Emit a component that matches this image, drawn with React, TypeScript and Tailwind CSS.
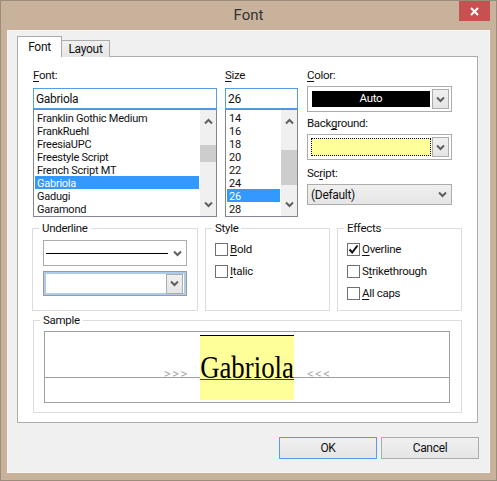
import type { ReactNode } from "react";

const fontNames = ["Franklin Gothic Medium", "FrankRuehl", "FreesiaUPC", "Freestyle Script", "French Script MT", "Gabriola", "Gadugi", "Garamond"];
const sizes = ["14", "16", "18", "20", "22", "24", "26", "28"];

const Chevron = ({ up = false }: { up?: boolean }) => (
  <svg width="9" height="7" viewBox="0 0 9 7" className={up ? "rotate-180" : ""}>
    <path d="M1 1.5 L4.5 5 L8 1.5" fill="none" stroke="#5f5f5f" strokeWidth="2" />
  </svg>
);

const Key = ({ children }: { children: ReactNode }) => <span className="underline underline-offset-2">{children}</span>;

const DropButton = () => (
  <div className="flex w-[17px] items-center justify-center self-stretch border border-[#acacac] bg-gradient-to-b from-[#f0f0f0] to-[#e5e5e5]">
    <Chevron />
  </div>
);

const ListBox = ({ items, selected, width, thumbTop, thumbHeight }: { items: string[]; selected: string; width: string; thumbTop: string; thumbHeight: string }) => (
  <div className={"flex h-[108px] overflow-hidden border border-[#828790] bg-white pl-px " + width}>
    <div className="min-w-0 flex-1 pt-px text-[11px] tracking-[-0.25px]">
      {items.map((item) => (
        <div key={item} className={"h-[13px] whitespace-nowrap pl-[2px] leading-[15px] " + (item === selected ? "bg-[#3399ff] text-white" : "")}>
          {item}
        </div>
      ))}
    </div>
    <div className="relative ml-px flex w-[16px] flex-col items-center justify-between bg-[#f0f0f0] py-[8px]">
      <Chevron up />
      <div className={"absolute inset-x-0 bg-[#cdcdcd] " + thumbTop + " " + thumbHeight} />
      <Chevron />
    </div>
  </div>
);

const CheckRow = ({ label, checked = false }: { label: ReactNode; checked?: boolean }) => (
  <div className="flex h-[13px] items-center gap-[2px]">
    <div className="flex h-[13px] w-[13px] items-center justify-center border border-[#707070] bg-white">
      {checked && (
        <svg width="11" height="11" viewBox="0 0 11 11">
          <path d="M1.5 5.5 L4.2 8.5 L9.5 1.5" fill="none" stroke="#111" strokeWidth="2" />
        </svg>
      )}
    </div>
    <span>{label}</span>
  </div>
);

const Group = ({ title, className, children }: { title: string; className: string; children: ReactNode }) => (
  <fieldset className={"border border-[#dcdcdc] " + className}>
    <legend className="ml-[6px] px-[3px] leading-[16px]">{title}</legend>
    {children}
  </fieldset>
);

export default function App() {
  return (
    <div className="flex h-[481px] w-[497px] flex-col border border-[#9b8c7b] bg-[#c9b29b] font-['Roboto',sans-serif] text-[11.5px] tracking-[-0.3px] text-[#111]">
      <div className="relative flex h-[29px] shrink-0 items-center justify-center text-[15px] tracking-normal text-[#333]">
        Font
        <div className="absolute right-[6px] top-0 flex h-[20px] w-[31px] items-center justify-center bg-[#c75050]">
          <svg width="9" height="9" viewBox="0 0 9 9">
            <path d="M1 1 L8 8 M8 1 L1 8" stroke="#fff" strokeWidth="2" />
          </svg>
        </div>
      </div>

      <div className="mx-[6px] mb-[7px] flex flex-1 flex-col border border-[#f7f7f7] bg-[#f0f0f0] px-[9px] pt-[5px]">
        {/* Tabs */}
        <div className="relative z-10 flex h-[21px] items-end">
          <div className="flex h-[21px] w-[45px] items-center justify-center border border-b-0 border-[#acacac] bg-white text-[12px]">Font</div>
          <div className="flex h-[17px] w-[48px] items-center justify-center border border-b-0 border-l-0 border-[#acacac] bg-gradient-to-b from-[#f0f0f0] to-[#e5e5e5] text-[12px]">Layout</div>
        </div>

        {/* Tab pane */}
        <div className="-mt-px h-[367px] w-[461px] border border-[#acacac] bg-white pl-[15px] pt-[10px]">
          <div className="flex">
            <div className="w-[184px]">
              <div className="mb-[5px] h-[16px] leading-[16px]"><Key>F</Key>ont:</div>
              <div className="flex h-[21px] items-center border border-[#569de5] pl-[2px] text-[12px]">Gabriola</div>
              <ListBox items={fontNames} selected="Gabriola" width="w-[184px]" thumbTop="top-[35px]" thumbHeight="h-[17px]" />
            </div>
            <div className="ml-[8px] w-[73px]">
              <div className="mb-[5px] h-[16px] leading-[16px]"><Key>S</Key>ize</div>
              <div className="flex h-[21px] items-center border border-[#569de5] pl-[2px] text-[12px]">26</div>
              <ListBox items={sizes} selected="26" width="w-[73px]" thumbTop="top-[40px]" thumbHeight="h-[35px]" />
            </div>
            <div className="ml-[9px] w-[145px]">
              <div className="h-[16px] leading-[16px]"><Key>C</Key>olor:</div>
              <div className="mt-[3px] flex h-[26px] items-center border border-[#acacac] pl-[4px] pr-[2px]">
                <div className="mr-[2px] flex h-[16px] flex-1 items-center justify-center bg-black text-white">Auto</div>
                <div className="flex h-[20px] self-center"><DropButton /></div>
              </div>
              <div className="mt-[3px] h-[16px] leading-[16px]">Back<Key>g</Key>round:</div>
              <div className="mt-[3px] flex h-[26px] items-center border border-[#acacac] pl-[3px] pr-[2px]">
                <div className="mr-[1px] h-[18px] flex-1 border border-dotted border-black bg-[#ffff99]" />
                <div className="flex h-[20px] self-center"><DropButton /></div>
              </div>
              <div className="mt-[5px] h-[16px] leading-[16px]">Sc<Key>r</Key>ipt:</div>
              <div className="mt-[3px] flex h-[21px] items-center justify-between border border-[#acacac] bg-gradient-to-b from-[#f0f0f0] to-[#e5e5e5] pl-[3px] pr-[4px] text-[12px]">
                (Default)
                <Chevron />
              </div>
            </div>
          </div>

          {/* Underline, Style, Effects */}
          <div className="mt-[3px] flex">
            <Group title="Underline" className="-ml-px h-[91px] w-[166px]">
              <div className="px-[10px] pt-[4px]">
                <div className="flex h-[26px] items-center justify-between border border-[#acacac] pl-[2px] pr-[4px]">
                  <div className="h-px w-[122px] border-t border-black" />
                  <Chevron />
                </div>
                <div className="mt-[5px] flex h-[25px] items-center justify-between border border-[#9a9a9a] bg-white">
                  <div className="flex h-full w-full items-center justify-end border-2 border-[#aecbe9] pr-px">
                    <div className="flex h-[20px]"><DropButton /></div>
                  </div>
                </div>
              </div>
            </Group>
            <Group title="Style" className="ml-[7px] h-[91px] w-[125px]">
              <div className="flex flex-col gap-[9px] px-[9px] pt-[7px]">
                <CheckRow label={<><Key>B</Key>old</>} />
                <CheckRow label={<><Key>I</Key>talic</>} />
              </div>
            </Group>
            <Group title="Effects" className="ml-[7px] h-[91px] w-[125px]">
              <div className="flex flex-col gap-[9px] px-[9px] pt-[7px]">
                <CheckRow checked label={<><Key>O</Key>verline</>} />
                <CheckRow label={<>S<Key>t</Key>rikethrough</>} />
                <CheckRow label={<><Key>A</Key>ll caps</>} />
              </div>
            </Group>
          </div>

          {/* Sample */}
          <Group title="Sample" className="mt-px h-[101px] w-[429px]">
            <div className="px-[10px] pt-[3px]">
              <div className="relative flex h-[72px] w-[406px] justify-center overflow-hidden border border-[#a0a0a0]">
                <div className="absolute inset-x-0 top-[45px] h-px bg-[#a0a0a0]" />
                <div className="absolute left-[119px] top-[32px] text-[13px] tracking-[1.5px] text-[#aaaaaa]">&gt;&gt;&gt;</div>
                <div className="absolute left-[262px] top-[32px] text-[13px] tracking-[1.5px] text-[#aaaaaa]">&lt;&lt;&lt;</div>
                <div className="relative mt-[3px] h-[65px] w-[94px] border-t border-black bg-[#ffff99] text-center font-['Liberation_Serif',serif] text-[26.8px] leading-[66px] tracking-normal text-black">
                  <span className="inline-block origin-[50%_62%] scale-y-[1.2]">Gabriola</span>
                  <div className="absolute inset-x-0 top-[43px] h-px bg-[#cc0000]" />
                </div>
              </div>
            </div>
          </Group>
        </div>

        {/* Buttons */}
        <div className="mt-[14px] flex justify-end gap-[4px]">
          <div className="flex h-[22px] w-[98px] items-center justify-center border border-[#569de5] bg-gradient-to-b from-[#f0f0f0] to-[#e5e5e5] text-[12px]">OK</div>
          <div className="mr-px flex h-[22px] w-[98px] items-center justify-center border border-[#acacac] bg-gradient-to-b from-[#f0f0f0] to-[#e5e5e5] text-[12px]">Cancel</div>
        </div>
      </div>
    </div>
  );
}
